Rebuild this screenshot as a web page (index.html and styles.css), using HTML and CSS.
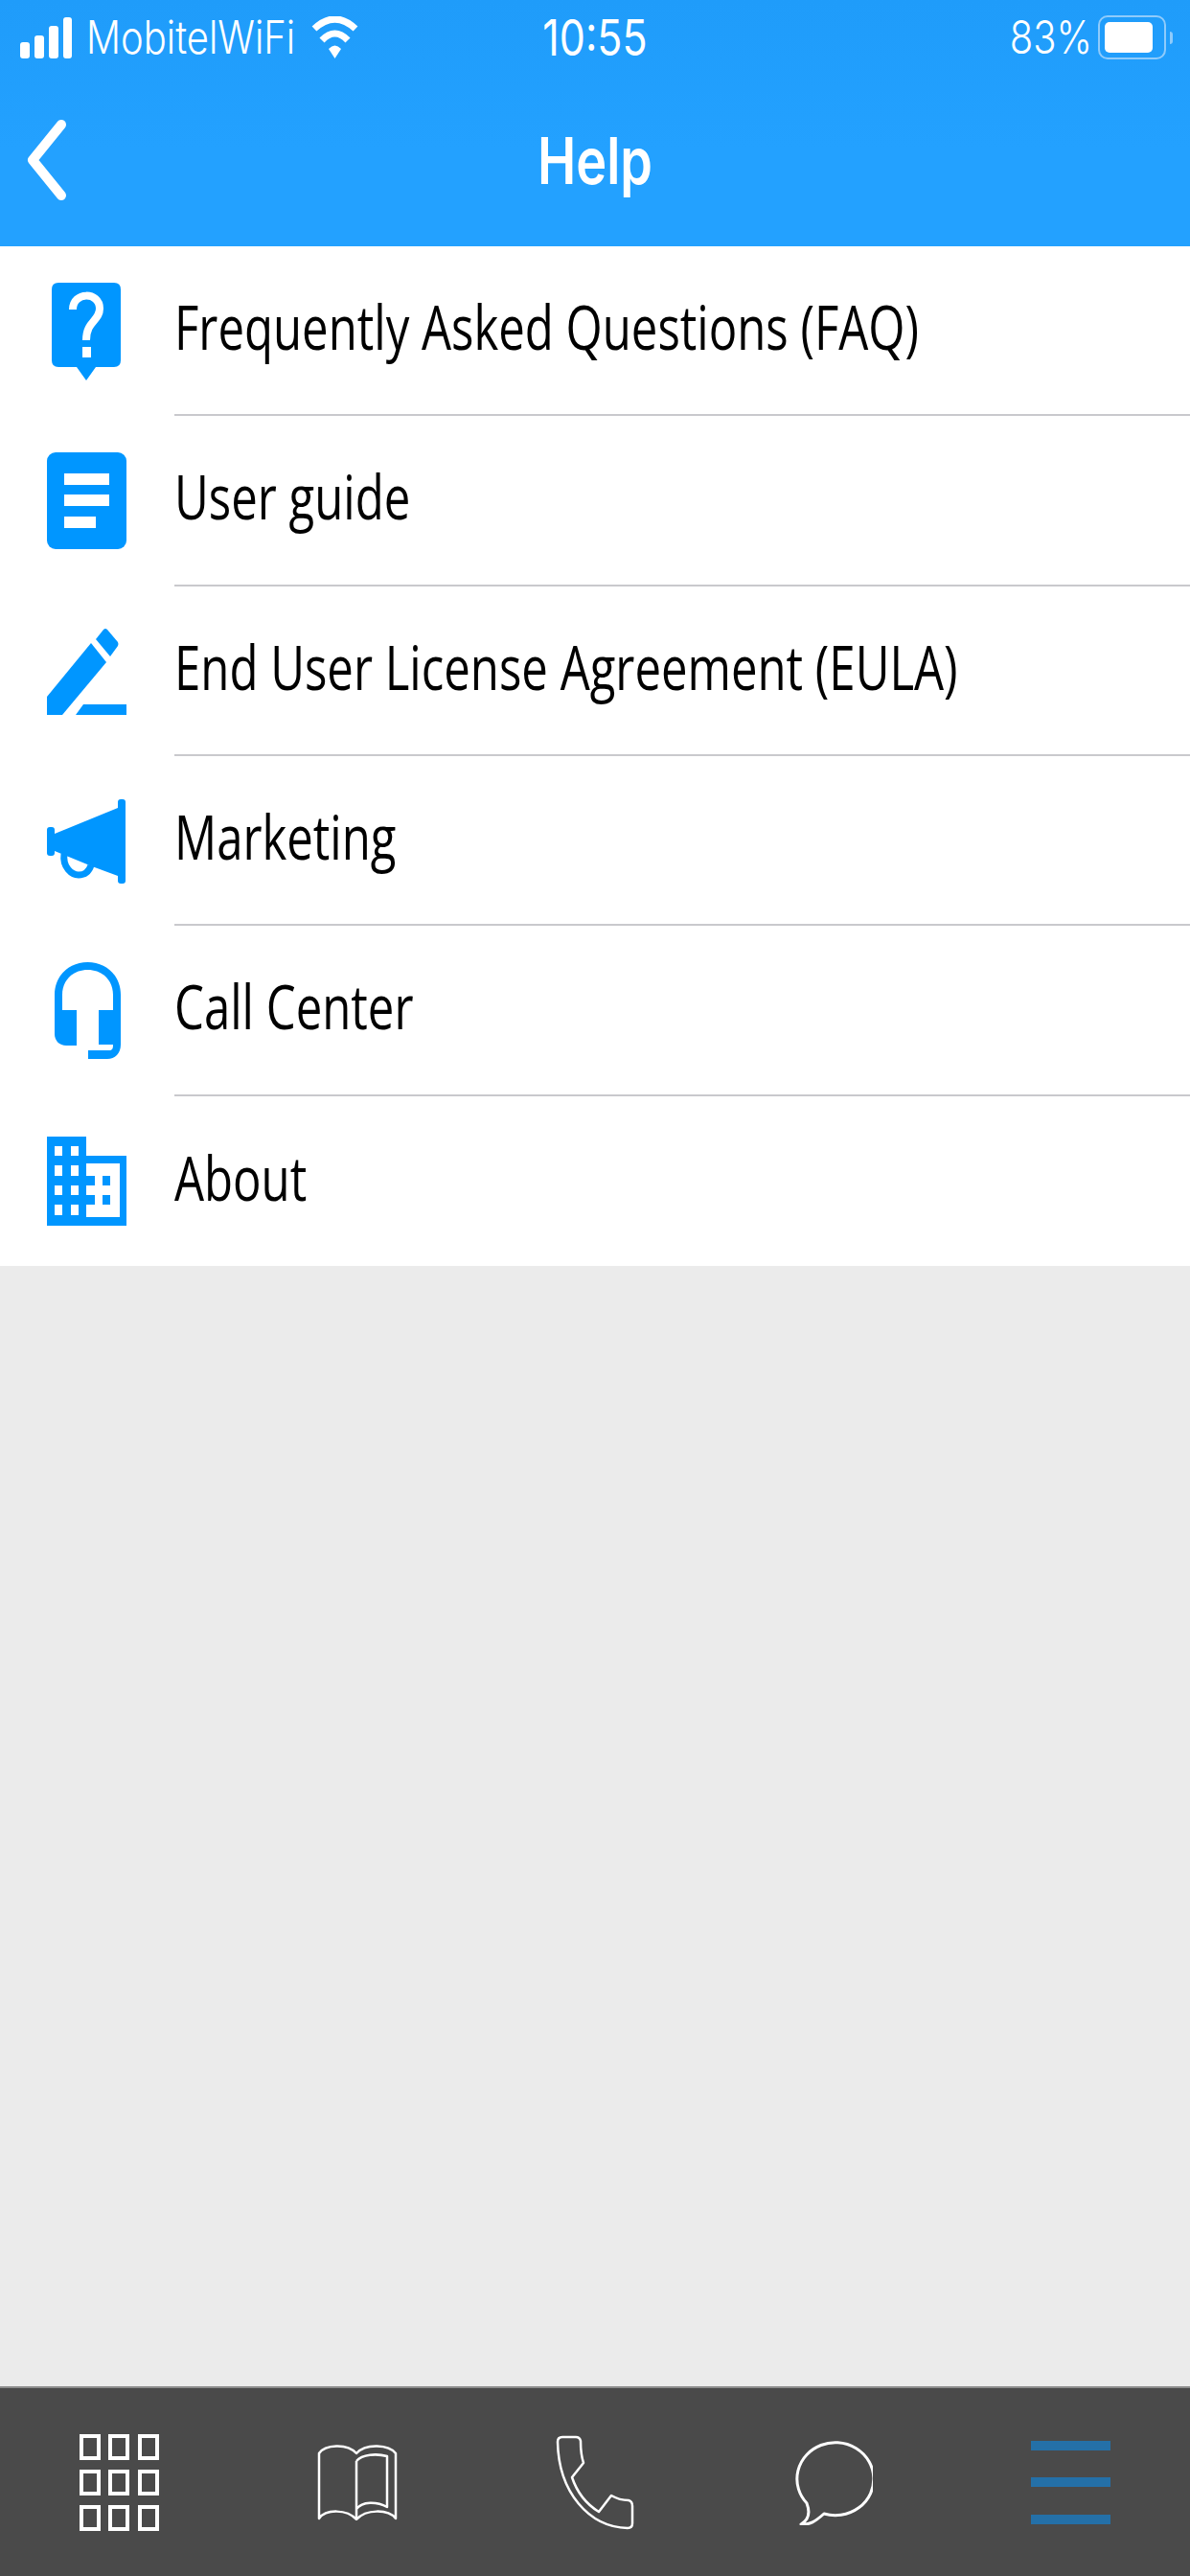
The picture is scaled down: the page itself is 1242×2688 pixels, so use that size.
FILE: index.html

```html
<!DOCTYPE html>
<html lang="en">
<head>
  <meta charset="UTF-8" />
  <title>Help</title>
  <link rel="stylesheet" href="styles.css">
</head>
<body>

<div class="page">
  <header class="header">
    <div class="status">
      <div class="status-left">
        <svg class="ic-signal" viewBox="0 0 54 43"><rect x="0" y="26" width="10" height="17" rx="3"/><rect x="15" y="19" width="10" height="24" rx="3"/><rect x="30" y="9" width="10" height="34" rx="3"/><rect x="45" y="0" width="9" height="43" rx="3"/></svg>
        <span class="status-text carrier">MobitelWiFi</span>
        <svg class="ic-wifi" viewBox="0 0 49 44"><path class="wifi-arc" d="M3 13Q24.500 -7 46 13"/><path class="wifi-arc" d="M11 25Q24.500 11 38 25"/><path d="M18 34Q24.500 27 31 34L24.500 44Z" fill="#fff"/></svg>
      </div>
      <span class="status-text time">10:55</span>
      <div class="status-right">
        <span class="status-text percent">83%</span>
        <div class="battery"><div class="battery-fill"></div></div>
        <div class="battery-cap"></div>
      </div>
    </div>
    <div class="nav">
      <svg class="ic-back" viewBox="0 0 42 86"><path d="M36 6L6 43L36 80"/></svg>
      <span class="nav-title">Help</span>
    </div>
  </header>

  <ul class="menu">
    <li class="menu-row">
      <div class="menu-icon">
        <svg class="ic-faq" viewBox="0 0 72 102"><path d="M7 0H65Q72 0 72 7V81Q72 88 65 88H46L36 102L26 88H7Q0 88 0 81V7Q0 0 7 0Z"/><path class="faq-mark" d="M22 28C22 9 50 9 50 27C50 40 36 40 36 60"/><rect class="cut" x="32" y="67" width="9" height="11"/></svg>
      </div>
      <div class="menu-label"><span>Frequently Asked Questions (FAQ)</span></div>
    </li>
    <li class="menu-row">
      <div class="menu-icon">
        <svg class="ic-doc" viewBox="0 0 83 101"><rect width="83" height="101" rx="9"/><rect class="cut" x="18" y="22" width="47" height="12"/><rect class="cut" x="18" y="44" width="47" height="12"/><rect class="cut" x="18" y="67" width="33" height="12"/></svg>
      </div>
      <div class="menu-label"><span>User guide</span></div>
    </li>
    <li class="menu-row">
      <div class="menu-icon">
        <svg class="ic-pencil" viewBox="0 0 83 91"><path d="M0 72L46 16L62 36L16 91H0Z"/><path d="M51 12L59 2Q61 0 63 2L74 15Q75 17 74 19L66 30Z"/><path d="M38 80H83V91H30Z"/></svg>
      </div>
      <div class="menu-label"><span>End User License Agreement (EULA)</span></div>
    </li>
    <li class="menu-row">
      <div class="menu-icon">
        <svg class="ic-horn" viewBox="0 0 82 88"><rect x="0" y="29" width="8" height="30" rx="3"/><rect x="74" y="0" width="8" height="88" rx="3"/><path d="M8 36L74 9V80L47 70L8 54Z"/><path class="horn-handle" d="M18 57C16 71 26 79 33 79C40 79 44 75 46 69"/></svg>
      </div>
      <div class="menu-label"><span>Marketing</span></div>
    </li>
    <li class="menu-row">
      <div class="menu-icon">
        <svg class="ic-headset" viewBox="0 0 69 101"><path d="M0 50V34C0 14 15 0 34.500 0C54 0 69 14 69 34V86C69 95 63 101 55 101H35V92H57C60 92 61 90 61 87V34C61 19 50 8 34.500 8C19 8 8 19 8 34V50Z"/><path d="M0 50H23V87H12C5 87 0 82 0 75Z"/><rect x="46" y="50" width="16" height="36"/></svg>
      </div>
      <div class="menu-label"><span>Call Center</span></div>
    </li>
    <li class="menu-row">
      <div class="menu-icon">
        <svg class="ic-building" viewBox="0 0 83 93">
          <path d="M0 0H41V20H83V93H0Z"/>
          <path class="cut" d="M8 10h8v10h-8zM25 10h8v10h-8zM8 30h8v11h-8zM25 30h8v11h-8zM8 51h8v10h-8zM25 51h8v10h-8zM8 71h8v11h-8zM25 71h8v11h-8z"/>
          <path class="cut" d="M41 28H76V84H41V71H50V61H41V51H50V41H41Z"/>
          <path d="M58 41h8v10h-8zM58 61h8v10h-8z"/>
        </svg>
      </div>
      <div class="menu-label"><span>About</span></div>
    </li>
  </ul>

  <div class="filler"></div>

  <nav class="tabbar">
    <div class="tab">
      <div class="ic-grid">
        <i></i><i></i><i></i><i></i><i></i><i></i><i></i><i></i><i></i>
      </div>
    </div>
    <div class="tab">
      <svg class="ic-book" viewBox="0 0 84 80"><path d="M2 78V10C8 1 31 -1 41 10C51 -1 75 1 82 10V78C74 68 51 68 41 79C31 68 9 68 2 78Z"/><path d="M41 18C47 11 62 10 73 13V66C62 60 47 60 41 68M41 18V79"/></svg>
    </div>
    <div class="tab">
      <svg class="ic-phone" viewBox="0 0 82 99"><path d="M2 7Q2 2 7 2H21Q25 2 26 6Q26 20 29 29L17 44C22 59 32 72 45 80L58 63C65 67 72 68 76 68Q80 69 80 74V92Q80 97 75 97C35 96 3 60 2 7Z"/></svg>
    </div>
    <div class="tab">
      <svg class="ic-chat" viewBox="0 0 84 90"><path d="M15 67C18 75 18 84 9 89C18 90 24 86 33 78A40 38 0 1 0 15 67Z"/></svg>
    </div>
    <div class="tab">
      <div class="ic-burger"><i></i><i></i><i></i></div>
    </div>
  </nav>
</div>

</body>
</html>
```

FILE: styles.css

```css
* {
  box-sizing: border-box;
}
body {
  margin: 0;
  font-family: "Open Sans", "Liberation Sans", sans-serif;
  color: #000;
}
svg {
  display: block;
}
.page {
  width: 1242px;
  height: 2688px;
  display: flex;
  flex-direction: column;
  background-color: #ebebeb;
  overflow: hidden;
}

/* blue top part */
.header {
  height: 257px;
  background: linear-gradient(#1f9cfa, #23a1ff 60%);
  color: #fff;
}
.status {
  height: 78px;
  display: grid;
  grid-template-columns: 1fr auto 1fr;
  align-items: center;
}
.status-left, .status-right {
  display: flex;
  align-items: center;
}
.status-left {
  padding-left: 21px;
}
.status-right {
  justify-content: flex-end;
  padding-right: 18px;
}
.status-text {
  display: inline-block;
  font-family: Inter, "Liberation Sans", sans-serif;
  font-size: 40px;
  font-weight: 300;
  line-height: 46px;
  transform: scaleY(1.2);
}
.time {
  font-size: 43px;
  font-weight: 400;
}
.carrier {
  margin-left: 15px;
}
.ic-signal {
  width: 54px;
  height: 43px;
  fill: #fff;
}
.ic-wifi {
  width: 49px;
  height: 44px;
  margin-left: 17px;
  fill: none;
}
.wifi-arc {
  stroke: #fff;
  stroke-width: 7;
}
.battery {
  width: 71px;
  height: 46px;
  margin-left: 6px;
  padding: 5px;
  border: 2px solid #8fcbfb;
  border-radius: 10px;
}
.battery-fill {
  width: 50px;
  height: 100%;
  background-color: #fff;
  border-radius: 5px;
}
.battery-cap {
  width: 3px;
  height: 13px;
  margin-left: 4px;
  background-color: #8fcbfb;
  border-radius: 0 3px 3px 0;
}
.nav {
  height: 178px;
  padding-left: 28px;
  display: flex;
  align-items: center;
  position: relative;
}
.ic-back {
  width: 42px;
  height: 86px;
  fill: none;
  stroke: #fff;
  stroke-width: 10;
  stroke-linecap: round;
  stroke-linejoin: round;
}
.nav-title {
  position: absolute;
  left: 0;
  right: 0;
  text-align: center;
  font-family: Inter, "Liberation Sans", sans-serif;
  font-size: 54px;
  font-weight: 600;
  transform: scaleY(1.24);
}

/* list */
.menu {
  list-style: none;
  margin: 0;
  padding: 0;
  height: 1064px;
  display: grid;
  grid-template-rows: repeat(6, 1fr);
  background-color: #fff;
}
.menu-row {
  display: flex;
}
.menu-icon {
  width: 182px;
  padding-left: 49px;
  display: flex;
  align-items: center;
}
.menu-icon svg {
  fill: #0096ff;
}
.cut {
  fill: #fff;
}
.menu-label {
  flex: 1;
  display: flex;
  align-items: center;
  padding-bottom: 10px;
  border-bottom: 2px solid #c9c9cd;
}
.menu-row:last-child .menu-label {
  border-bottom: none;
}
.menu-label span {
  display: inline-block;
  font-size: 52px;
  transform-origin: left center;
  transform: scale(0.944, 1.23);
}
.ic-faq {
  width: 72px;
  height: 102px;
  margin-left: 5px;
}
.ic-doc {
  width: 83px;
  height: 101px;
}
.ic-pencil {
  width: 83px;
  height: 91px;
}
.ic-horn {
  width: 82px;
  height: 88px;
}
.ic-headset {
  width: 69px;
  height: 101px;
  margin-left: 8px;
}
.ic-building {
  width: 83px;
  height: 93px;
}
.faq-mark {
  fill: none;
  stroke: #fff;
  stroke-width: 8;
}
.horn-handle {
  fill: none;
  stroke: #0096ff;
  stroke-width: 7;
}

.filler {
  flex: 1;
}

/* bottom bar */
.tabbar {
  height: 198px;
  display: grid;
  grid-template-columns: repeat(5, 1fr);
  align-items: center;
  justify-items: center;
  background-color: #4a4a4a;
  border-top: 2px solid #8c8c8c;
}
.ic-grid {
  width: 83px;
  height: 101px;
  display: grid;
  grid-template-columns: repeat(3, 22px);
  grid-template-rows: repeat(3, 27px);
  justify-content: space-between;
  align-content: space-between;
}
.ic-grid i {
  border: 4px solid #fff;
}
.ic-book, .ic-phone, .ic-chat {
  fill: none;
  stroke: #fff;
  stroke-width: 2.5;
  stroke-linejoin: round;
}
.ic-book {
  width: 84px;
  height: 80px;
}
.ic-phone {
  width: 82px;
  height: 99px;
}
.ic-chat {
  width: 84px;
  height: 90px;
  stroke-width: 3;
}
.ic-burger {
  width: 83px;
  height: 87px;
  display: flex;
  flex-direction: column;
  justify-content: space-between;
}
.ic-burger i {
  height: 10px;
  background-color: #2470a8;
}
```
